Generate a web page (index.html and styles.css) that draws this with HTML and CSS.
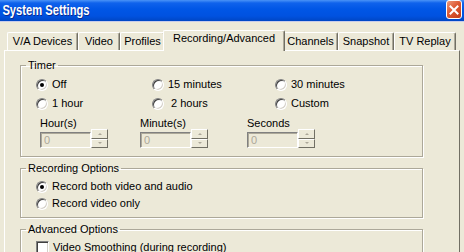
FILE: index.html
```html
<!DOCTYPE html>
<html lang="en">
<head>
  <meta charset="UTF-8">
  <title>System Settings</title>
  <link rel="stylesheet" href="styles.css">
</head>
<body>
<div class="titlebar">
  <span class="title">System Settings</span>
  <span class="close">
    <svg width="10" height="10" viewBox="0 0 10 10">
      <path d="M1.5 1.5 L8.5 8.5 M8.5 1.5 L1.5 8.5" stroke="#fff" stroke-width="2" stroke-linecap="square"/>
    </svg>
  </span>
</div>

<div class="tabs">
  <div class="tab w-va">V/A Devices</div>
  <div class="tab w-video">Video</div>
  <div class="tab w-profiles">Profiles</div>
  <div class="tab active w-rec">Recording/Advanced</div>
  <div class="tab w-channels">Channels</div>
  <div class="tab w-snap">Snapshot</div>
  <div class="tab w-replay">TV Replay</div>
</div>

<div class="panel">
  <fieldset class="group group-timer">
    <legend>Timer</legend>
    <div class="timer-grid">
      <label class="radio"><span class="radio-box checked"></span>Off</label>
      <label class="radio"><span class="radio-box"></span>15 minutes</label>
      <label class="radio"><span class="radio-box"></span>30 minutes</label>
      <label class="radio"><span class="radio-box"></span>1 hour</label>
      <label class="radio"><span class="radio-box"></span>&nbsp;2 hours</label>
      <label class="radio"><span class="radio-box"></span>Custom</label>
    </div>
    <div class="spin-row">
      <div class="spin-field f-hour">
        <div class="spin-label">Hour(s)</div>
        <div class="spin">
          <div class="spin-input">0</div>
          <div class="spin-buttons">
            <span class="spin-btn"><span class="arrow up"></span></span>
            <span class="spin-btn"><span class="arrow down"></span></span>
          </div>
        </div>
      </div>
      <div class="spin-field f-minute">
        <div class="spin-label">Minute(s)</div>
        <div class="spin">
          <div class="spin-input">0</div>
          <div class="spin-buttons">
            <span class="spin-btn"><span class="arrow up"></span></span>
            <span class="spin-btn"><span class="arrow down"></span></span>
          </div>
        </div>
      </div>
      <div class="spin-field">
        <div class="spin-label">Seconds</div>
        <div class="spin">
          <div class="spin-input">0</div>
          <div class="spin-buttons">
            <span class="spin-btn"><span class="arrow up"></span></span>
            <span class="spin-btn"><span class="arrow down"></span></span>
          </div>
        </div>
      </div>
    </div>
  </fieldset>

  <fieldset class="group group-rec">
    <legend>Recording Options</legend>
    <div class="stack">
      <label class="radio row17"><span class="radio-box checked"></span>Record both video and audio</label>
      <label class="radio row17"><span class="radio-box"></span>Record video only</label>
    </div>
  </fieldset>

  <fieldset class="group group-adv">
    <legend>Advanced Options</legend>
    <div class="stack">
      <label class="radio row17"><span class="check-box"></span>Video Smoothing (during recording)</label>
    </div>
  </fieldset>
</div>
</body>
</html>
```

FILE: styles.css
```css
* {
  box-sizing: border-box;
}

body {
  margin: 0;
  width: 464px;
  height: 252px;
  overflow: hidden;
  background-color: #ECE9D8;
  color: #000;
  font-family: "Liberation Sans", Arial, sans-serif;
  font-size: 11px;
  line-height: 13px;
}

/* window caption */
.titlebar {
  height: 22px;
  display: flex;
  justify-content: space-between;
  align-items: flex-start;
  background: linear-gradient(#4A93F7 0, #0F62EC 3px, #0056E6 9px, #0052E0 16px, #0046C4 21px);
  border-bottom: 1px solid #C8CCEA;
}

.title {
  display: inline-block;
  padding: 2px 0 0 3px;
  font-weight: bold;
  font-size: 14px;
  line-height: 16px;
  color: #fff;
  text-shadow: 1px 1px #0A2A90;
  transform: scaleX(0.8);
  transform-origin: left top;
}

.close {
  width: 16px;
  height: 19px;
  margin-right: 2px;
  display: flex;
  align-items: center;
  justify-content: center;
  border: 1px solid #fff;
  border-radius: 3px;
  background: linear-gradient(135deg, #EE9A7C, #DD5A34 45%, #C23C1A);
}

/* tab strip */
.tabs {
  height: 28px;
  display: flex;
  align-items: flex-end;
  padding-left: 7px;
}

.tab {
  height: 18px;
  padding-top: 2px;
  text-align: center;
  white-space: nowrap;
  border-top: 1px solid #fff;
  border-left: 1px solid #fff;
  border-right: 1px solid #716F64;
  border-radius: 2px 2px 0 0;
  box-shadow: inset -1px 0 #ACA899;
}

.tab.active {
  position: relative;
  height: 21px;
  margin: 0 -2px -1px;
  padding-top: 1px;
  background-color: #ECE9D8;
  z-index: 1;
}

.w-va { width: 71px; }
.w-video { width: 42px; }
.w-profiles { width: 45px; }
.w-rec { width: 122px; }
.w-channels { width: 55px; }
.w-snap { width: 56px; }
.w-replay { width: 62px; }

/* page body */
.panel {
  width: 456px;
  height: 210px;
  margin-left: 4px;
  padding: 8px 0 0 15px;
  border-top: 1px solid #fff;
  border-left: 1px solid #fff;
  border-right: 1px solid #716F64;
}

.group {
  width: 403px;
  margin: 0;
  padding: 0;
  border: 1px solid #ACA899;
  box-shadow: 1px 1px 0 #fff, inset 1px 1px 0 #fff;
}

.group legend {
  margin-left: 5px;
  padding: 0 2px;
}

.group-rec,
.group-adv {
  margin-top: 5px;
}

.group-timer {
  padding-bottom: 8px;
}

.group-rec {
  padding-bottom: 5px;
}

.timer-grid {
  display: grid;
  grid-template-columns: 116px 123px auto;
  grid-auto-rows: 19px;
  margin-top: 3px;
  padding-left: 15px;
}

.stack {
  margin-top: 3px;
  padding-left: 15px;
}

.radio {
  display: flex;
  align-items: center;
  gap: 4px;
  white-space: nowrap;
}

.row17 {
  height: 17px;
}

.radio-box {
  width: 12px;
  height: 12px;
  display: flex;
  align-items: center;
  justify-content: center;
  border-radius: 50%;
  border: 1px solid;
  border-color: #808080 #fff #fff #808080;
  box-shadow: inset 1px 1px #404040, inset -1px -1px #D4D0C8;
  background-color: #fff;
}

.radio-box.checked::after {
  content: "";
  width: 4px;
  height: 4px;
  border-radius: 50%;
  background-color: #000;
}

.check-box {
  width: 13px;
  height: 13px;
  border: 1px solid;
  border-color: #808080 #fff #fff #808080;
  box-shadow: inset 1px 1px #404040, inset -1px -1px #D4D0C8;
  background-color: #fff;
}

/* spin boxes */
.spin-row {
  display: flex;
  margin-top: 4px;
  padding-left: 19px;
}

.f-hour { width: 100px; }
.f-minute { width: 107px; }

.spin {
  display: flex;
  align-items: flex-end;
  margin-top: -1px;
}

.spin-input {
  width: 51px;
  height: 16px;
  padding: 1px 0 0 3px;
  color: #ACA899;
  border: 1px solid;
  border-color: #808080 #fff #fff #808080;
  box-shadow: inset 1px 1px #ACA899;
  background-color: #ECE9D8;
}

.spin-buttons {
  width: 17px;
  height: 19px;
  display: flex;
  flex-direction: column;
}

.spin-btn {
  flex: 1;
  display: flex;
  align-items: center;
  justify-content: center;
  border: 1px solid;
  border-color: #fff #716F64 #716F64 #fff;
  background-color: #ECE9D8;
}

.arrow {
  width: 0;
  height: 0;
  border-left: 2px solid transparent;
  border-right: 2px solid transparent;
}

.arrow.up {
  border-bottom: 2px solid #ACA899;
}

.arrow.down {
  border-top: 2px solid #ACA899;
}
```
